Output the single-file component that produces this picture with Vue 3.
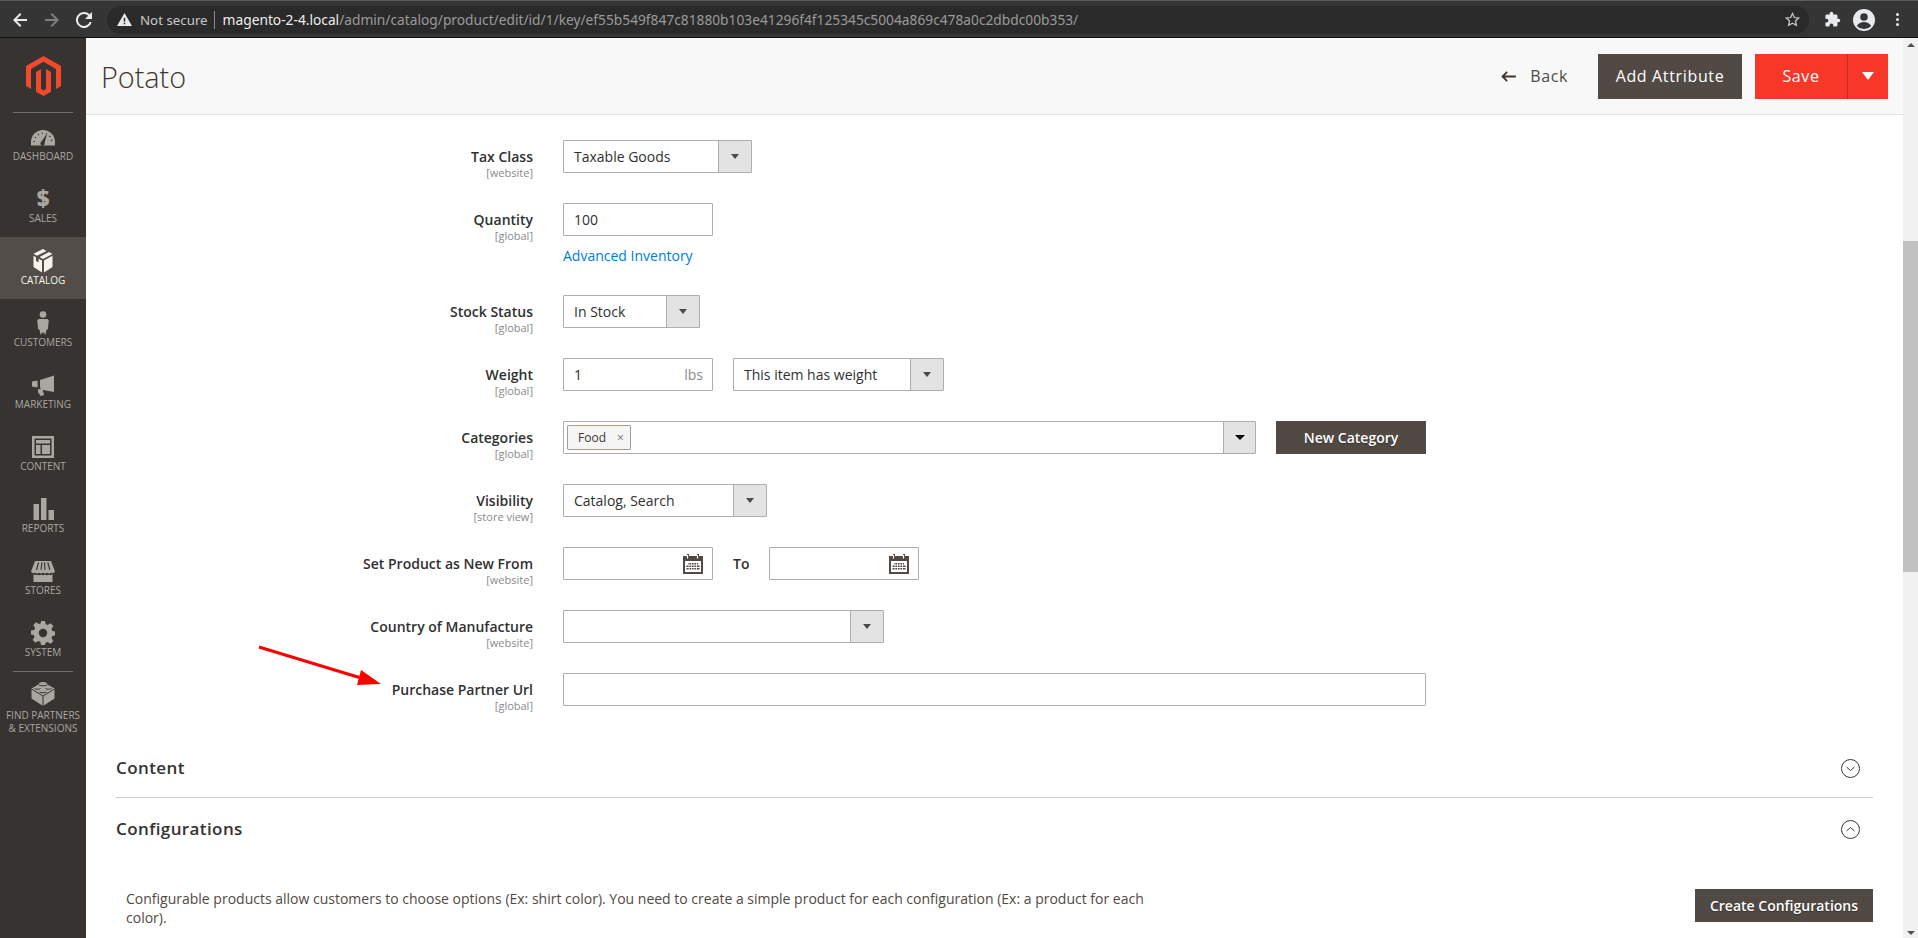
<script setup>
const url = {
  host: 'magento-2-4.local',
  path: '/admin/catalog/product/edit/id/1/key/ef55b549f847c81880b103e41296f4f125345c5004a869c478a0c2dbdc00b353/',
}

const menu = [
  { key: 'dashboard', label: 'Dashboard' },
  { key: 'sales', label: 'Sales' },
  { key: 'catalog', label: 'Catalog', active: true },
  { key: 'customers', label: 'Customers' },
  { key: 'marketing', label: 'Marketing' },
  { key: 'content', label: 'Content' },
  { key: 'reports', label: 'Reports' },
  { key: 'stores', label: 'Stores' },
  { key: 'system', label: 'System' },
]
</script>

<template>
  <div class="app">
    <header class="chrome">
      <svg class="nav" viewBox="0 0 16 16"><path d="M15 7H4.800l4.600-4.600L8 1 1 8l7 7 1.400-1.400L4.800 9H15z" fill="#e8eaed" /></svg>
      <svg class="nav" viewBox="0 0 16 16"><path d="M1 7h10.200L6.600 2.400 8 1l7 7-7 7-1.400-1.400L11.200 9H1z" fill="#7d7f82" /></svg>
      <svg class="nav" viewBox="0 0 16 16"><path d="M13.650 2.350A8 8 0 1 0 15.750 10h-2.100a6 6 0 1 1-1.400-6.250L9 7h7V0z" fill="#e8eaed" /></svg>
      <div class="omnibox">
        <svg class="warn" viewBox="0 0 16 16"><path d="M0 15 8 1l8 14z" fill="#e8eaed" /><path d="M7.200 6h1.600v4.500H7.200zM7.200 11.500h1.600V13H7.200z" fill="#2b2b2b" /></svg>
        <span class="secure">Not secure</span>
        <span class="url-sep"></span>
        <span class="url"><span class="host">{{ url.host }}</span>{{ url.path }}</span>
        <svg class="star" viewBox="0 0 24 24"><path d="M12 3.500l2.600 5.700 6.200.7-4.600 4.200 1.300 6.100L12 17.200l-5.500 3 1.300-6.100-4.600-4.200 6.200-.7z" fill="none" stroke="#c4c7c9" stroke-width="1.800" /></svg>
      </div>
      <svg class="ext" viewBox="0 0 24 24"><path d="M20.500 11H19V7a2 2 0 0 0-2-2h-4V3.500a2.500 2.500 0 0 0-5 0V5H4a2 2 0 0 0-2 2v3.800h1.500a2.700 2.700 0 0 1 0 5.400H2V20a2 2 0 0 0 2 2h3.800v-1.500a2.700 2.700 0 0 1 5.400 0V22H17a2 2 0 0 0 2-2v-4h1.500a2.500 2.500 0 0 0 0-5z" fill="#e8eaed" /></svg>
      <svg class="avatar" viewBox="0 0 24 24"><circle cx="12" cy="12" r="11" fill="#e8eaed" /><circle cx="12" cy="9" r="3.800" fill="#35363a" /><path d="M4.800 18c1.500-2.700 4.300-4 7.200-4s5.700 1.300 7.200 4A9.200 9.200 0 0 1 12 21a9.200 9.200 0 0 1-7.200-3z" fill="#35363a" /></svg>
      <div class="dots"><i></i><i></i><i></i></div>
    </header>

    <div class="body">
      <aside class="sidebar">
        <div class="logo">
          <svg viewBox="0 0 35 40"><path d="M17.500 0 0 10v20l5 2.900V13l12.500-7.200L30 13v19.900l5-2.900V10z" fill="#f1492d" /><path d="M20 32.900l-2.500 1.500-2.500-1.500V13l-5 2.900v19.800l7.500 4.300 7.500-4.300V15.900L20 13z" fill="#f1492d" /></svg>
        </div>
        <nav class="menu">
          <a v-for="item in menu" :key="item.key" class="item" :class="{ active: item.active }">
            <span class="icon">
              <svg v-if="item.key === 'dashboard'" viewBox="0 0 24 24"><path d="M0 20.500v-3.500A12 12 0 0 1 24 17v3.500z" fill="currentColor" /><path d="M3.200 17A8.800 8.800 0 0 1 20.800 17" fill="none" stroke="#373330" stroke-width="1.600" stroke-dasharray="1 3.200" /><path d="M16 8.500 10.600 16.500a2.200 2.200 0 1 0 3 1.300z" fill="#373330" /></svg>
              <span v-else-if="item.key === 'sales'" class="dollar">$</span>
              <svg v-else-if="item.key === 'catalog'" viewBox="0 0 24 24"><path d="M12 0 2.500 4.800 6 6.700l9.500-4.800zM18 3.100 8.500 8l3.500 1.900L21.500 5zM2.500 6.800V18l8.500 5.500V11.600l-3.500-1.900v3.500L5 12V8.200zM13 11.600v11.900l8.500-5.500V6.800z" fill="currentColor" /></svg>
              <svg v-else-if="item.key === 'customers'" viewBox="0 0 24 24"><circle cx="12" cy="3.500" r="3.300" fill="currentColor" /><path d="M7.500 8h9l1.300 1.500-1 9h-1.300L14.500 24l-1.800-3-.7 2-.7-2-1.800 3-1-5.500H7.200l-1-9z" fill="currentColor" /></svg>
              <svg v-else-if="item.key === 'marketing'" viewBox="0 0 24 24"><path d="M23 2.500v16.500L9.500 16.500v-2h-.5V7zM1 8.500l5.500-1v7l-5.500-1zM7 16l4.500.8 1.700 5.200-3.700 1-2.500-4z" fill="currentColor" /></svg>
              <svg v-else-if="item.key === 'content'" viewBox="0 0 24 24"><path d="M1 1h22v22H1zm2.500 2.500v17h17v-17z" fill="currentColor" /><path d="M5 5h14v3.500H5zM5 10h4.500v9H5zM11 10h8v9h-8z" fill="currentColor" /></svg>
              <svg v-else-if="item.key === 'reports'" viewBox="0 0 24 24"><path d="M2.500 7h5.500v16H2.500zM10 1h5.500v22H10zM17.500 13h5.500v10h-5.500z" fill="currentColor" /></svg>
              <svg v-else-if="item.key === 'stores'" viewBox="0 0 24 24"><path d="M4 2h16l4 10.500a3 3 0 0 1-4 1.300 3.500 3.500 0 0 1-4 0 3.500 3.500 0 0 1-4 0 3.500 3.500 0 0 1-4 0 3.500 3.500 0 0 1-4 0 3 3 0 0 1-4-1.300z" fill="currentColor" /><path d="M7.500 3.500 5.500 11M11 3.500 10 11M13.500 3.500 14 11M16.800 3.500 18.800 11" stroke="#373330" stroke-width="1.100" /><path d="M2.500 15.500a5 5 0 0 0 3.500.3 5 5 0 0 0 4 0 5 5 0 0 0 4 0 5 5 0 0 0 4 0 5 5 0 0 0 3.500-.3V23h-19z" fill="currentColor" /></svg>
              <svg v-else-if="item.key === 'system'" viewBox="0 0 24 24"><path fill-rule="evenodd" d="M10 0h4l.7 3.300 2 .8L19.500 2.300l2.800 2.800-1.800 2.800.8 2 3.300.7v3.800l-3.300.7-.8 2 1.800 2.800-2.800 2.800-2.800-1.800-2 .8L14 24h-4l-.7-3.300-2-.8-2.800 1.800-2.800-2.800 1.800-2.800-.8-2L0 13.400V9.600l3.300-.7.8-2L2.300 4.100l2.800-2.800 2.800 1.800 2-.8zM12 7.800a4.200 4.200 0 1 0 0 8.400 4.200 4.200 0 0 0 0-8.400z" fill="currentColor" /></svg>
            </span>
            <span class="label">{{ item.label }}</span>
          </a>
          <a class="item partners">
            <span class="icon">
              <svg viewBox="0 0 24 24"><path d="M12 0c2.500 0 4 .8 4 1.800v.5l7.500 4.200v10L12 24 .5 16.500v-10L8 2.300v-.5C8 .8 9.500 0 12 0z" fill="currentColor" /><path d="M.5 7 12 14l11.500-7M12 14v10M8 3c1 1 7 1 8 0M3.500 6.500c1 1 5 1 6 0M14.500 6.500c1 1 5 1 6 0M8.500 10c1 1 6 1 7 0" fill="none" stroke="#373330" stroke-width="1" /></svg>
            </span>
            <span class="label">Find Partners<br />&amp; Extensions</span>
          </a>
        </nav>
      </aside>

      <main class="main">
        <div class="page-head">
          <h1>Potato</h1>
          <div class="actions">
            <a class="back">
              <svg viewBox="0 0 16 12"><path d="M6.500 1 1.500 6l5 5M1.500 6H16" fill="none" stroke="#41362f" stroke-width="2" /></svg>
              Back
            </a>
            <button class="btn-head">Add Attribute</button>
            <div class="save">
              <span class="save-label">Save</span>
              <span class="save-toggle"><b></b></span>
            </div>
          </div>
        </div>

        <form class="form" @submit.prevent>
          <div class="row">
            <div class="caption"><label>Tax Class</label><small>[website]</small></div>
            <div class="select w-tax"><span>Taxable Goods</span><i><b></b></i></div>
          </div>

          <div class="row with-note">
            <div class="caption"><label>Quantity</label><small>[global]</small></div>
            <div>
              <div class="input w-short">100</div>
              <a class="link">Advanced Inventory</a>
            </div>
          </div>

          <div class="row">
            <div class="caption"><label>Stock Status</label><small>[global]</small></div>
            <div class="select w-stock"><span>In Stock</span><i><b></b></i></div>
          </div>

          <div class="row">
            <div class="caption"><label>Weight</label><small>[global]</small></div>
            <div class="input w-short weight">1<em>lbs</em></div>
            <div class="select w-weight"><span>This item has weight</span><i><b></b></i></div>
          </div>

          <div class="row">
            <div class="caption"><label>Categories</label><small>[global]</small></div>
            <div class="select w-cat">
              <span class="chips"><span class="chip">Food<u>×</u></span></span>
              <i class="cat-arrow"><b></b></i>
            </div>
            <button class="btn new-cat">New Category</button>
          </div>

          <div class="row">
            <div class="caption"><label>Visibility</label><small>[store view]</small></div>
            <div class="select w-vis"><span>Catalog, Search</span><i><b></b></i></div>
          </div>

          <div class="row">
            <div class="caption"><label>Set Product as New From</label><small>[website]</small></div>
            <div class="input w-short date">
              <svg viewBox="0 0 20 20"><path d="M0 2h20v18H0z" fill="#514943" /><path d="M2 7h16v11H2z" fill="#fff" /><path d="M4 2h2V0H4zM14 2h2V0h-2z" fill="#514943" /><path d="M4.500 1v3.500M14.500 1v3.500" stroke="#fff" stroke-width="1.200" /><path d="M5 9h10v1.500H5zM3.500 11.500h13V13h-13zM3.500 14h13v1.500h-13z" fill="#514943" /><path d="M6 9v7M8.500 9v7M11 9v7M13.500 9v7" stroke="#fff" stroke-width=".8" /></svg>
            </div>
            <span class="to">To</span>
            <div class="input w-short date">
              <svg viewBox="0 0 20 20"><path d="M0 2h20v18H0z" fill="#514943" /><path d="M2 7h16v11H2z" fill="#fff" /><path d="M4 2h2V0H4zM14 2h2V0h-2z" fill="#514943" /><path d="M4.500 1v3.500M14.500 1v3.500" stroke="#fff" stroke-width="1.200" /><path d="M5 9h10v1.500H5zM3.500 11.500h13V13h-13zM3.500 14h13v1.500h-13z" fill="#514943" /><path d="M6 9v7M8.500 9v7M11 9v7M13.500 9v7" stroke="#fff" stroke-width=".8" /></svg>
            </div>
          </div>

          <div class="row">
            <div class="caption"><label>Country of Manufacture</label><small>[website]</small></div>
            <div class="select w-country"><span></span><i><b></b></i></div>
          </div>

          <div class="row">
            <div class="caption"><label>Purchase Partner Url</label><small>[global]</small></div>
            <div class="input w-full"></div>
          </div>
        </form>

        <section class="section first">
          <h2>Content</h2>
          <svg class="toggle" viewBox="0 0 19 19"><circle cx="9.500" cy="9.500" r="9" fill="none" stroke="#41362f" stroke-width="1" /><path d="M5.500 8 9.500 11.500l4-3.500" fill="none" stroke="#41362f" stroke-width="1" /></svg>
        </section>
        <section class="section">
          <h2>Configurations</h2>
          <svg class="toggle" viewBox="0 0 19 19"><circle cx="9.500" cy="9.500" r="9" fill="none" stroke="#41362f" stroke-width="1" /><path d="M5.500 11 9.500 7.500l4 3.500" fill="none" stroke="#41362f" stroke-width="1" /></svg>
        </section>
        <div class="config">
          <p>Configurable products allow customers to choose options (Ex: shirt color). You need to create a simple product for each configuration (Ex: a product for each color).</p>
          <button class="btn create">Create Configurations</button>
        </div>
      </main>

      <div class="scrollbar">
        <span class="up"></span>
        <span class="thumb"></span>
        <span class="down"></span>
      </div>
    </div>

    <svg class="annotation" viewBox="0 0 140 50">
      <path d="M2 2 104 33" stroke="#f00" stroke-width="3" />
      <path d="M104 25 124 39 100 40z" fill="#f00" />
    </svg>
  </div>
</template>

<style scoped>
.app {
  position: relative;
  width: 1918px;
  height: 938px;
  overflow: hidden;
  display: flex;
  flex-direction: column;
  font-family: "Open Sans", "Noto Sans", sans-serif;
  background: #fff;
}

.chrome {
  height: 38px;
  flex: none;
  box-sizing: border-box;
  display: flex;
  align-items: center;
  padding: 1px 0 0 12px;
  background: #353535;
  border-top: 1px solid #5a5a5a;
  border-bottom: 1px solid #111;
}

.nav {
  width: 16px;
  height: 16px;
  margin-right: 16px;
}

.omnibox {
  width: 1702px;
  height: 28px;
  margin-left: -1px;
  display: flex;
  align-items: center;
  padding: 0 10px;
  box-sizing: border-box;
  background: #2a2a2a;
  border-radius: 14px;
  color: #9a9a9a;
  font-size: 13.75px;
  font-family: "Noto Sans", sans-serif;
  white-space: nowrap;
}

.warn {
  width: 15px;
  height: 15px;
}

.secure {
  margin-left: 8px;
  font-size: 13.3px;
  color: #c9c9c9;
}

.url-sep {
  width: 1px;
  height: 18px;
  margin: 0 8px 0 6px;
  background: #8a8a8a;
}

.host {
  color: #eee;
}

.url {
  flex: 1;
}

.star {
  width: 17px;
  height: 17px;
  margin-right: -2px;
}

.ext {
  width: 17px;
  height: 17px;
  margin-left: 15px;
}

.avatar {
  width: 24px;
  height: 24px;
  margin-left: 11px;
}

.dots {
  margin-left: 20px;
  display: flex;
  flex-direction: column;
  gap: 2px;
}

.dots i {
  width: 3px;
  height: 3px;
  border-radius: 50%;
  background: #e8eaed;
}

.body {
  flex: 1;
  display: flex;
  min-height: 0;
}

.sidebar {
  width: 86px;
  flex: none;
  background: #373330;
}

.logo {
  height: 75px;
  display: flex;
  align-items: center;
  justify-content: center;
  position: relative;
}

.logo svg {
  width: 35px;
  height: 40px;
}

.menu {
  display: flex;
  flex-direction: column;
}

.logo::after {
  content: '';
  position: absolute;
  left: 13px;
  right: 13px;
  bottom: 0;
  height: 1px;
  background: #736e69;
}

.item {
  height: 62px;
  box-sizing: border-box;
  padding-top: 12px;
  display: flex;
  flex-direction: column;
  align-items: center;
  color: #aaa6a0;
}

.item.active {
  background: #524d49;
  color: #f7f3eb;
}

.icon {
  width: 24px;
  height: 24px;
  display: flex;
  align-items: center;
  justify-content: center;
}

.icon svg {
  width: 24px;
  height: 24px;
}

.dollar {
  font-size: 22px;
  line-height: 24px;
  font-weight: 800;
  transform: translateY(-1px);
}

.label {
  margin-top: 1px;
  font-size: 10px;
  line-height: 13px;
  text-align: center;
  text-transform: uppercase;
  white-space: nowrap;
}

.partners {
  position: relative;
  padding-top: 11px;
  height: 80px;
}

.partners .label {
  margin-top: 3px;
}

.partners::before {
  content: '';
  position: absolute;
  left: 13px;
  right: 13px;
  top: 0;
  height: 1px;
  background: #736e69;
}

.main {
  flex: 1;
  min-width: 0;
}

.page-head {
  height: 77px;
  box-sizing: border-box;
  display: flex;
  align-items: center;
  justify-content: space-between;
  padding: 0 15px 0 15px;
  background: #f8f8f8;
  border-bottom: 1px solid #e3e3e3;
}

.page-head h1 {
  margin: 0;
  font-size: 28.8px;
  font-weight: 300;
  color: #41362f;
}

.actions {
  display: flex;
  align-items: center;
}

.back {
  display: flex;
  align-items: center;
  gap: 14px;
  margin-right: 30px;
  font-size: 16px;
  font-weight: 500;
  letter-spacing: .6px;
  color: #514943;
}

.back svg {
  width: 15px;
  height: 11px;
}

.btn-head {
  width: 144px;
  height: 45px;
  padding: 0;
  border: 0;
  background: #514943;
  color: #fff;
  font: 500 16px "Open Sans", sans-serif;
  letter-spacing: .65px;
}

.save {
  width: 133px;
  height: 45px;
  margin-left: 13px;
  display: flex;
  background: #f73829;
  color: #fff;
  font-size: 16px;
  font-weight: 500;
  letter-spacing: .6px;
}

.save-label {
  width: 92px;
  display: flex;
  align-items: center;
  justify-content: center;
  border-right: 1px solid #c92a1e;
}

.save-toggle {
  flex: 1;
  display: flex;
  align-items: center;
  justify-content: center;
}

.save-toggle b {
  border-left: 6px solid transparent;
  border-right: 6px solid transparent;
  border-top: 8px solid #fff;
}

.form {
  padding: 25px 0 1px 30px;
}

.row {
  display: flex;
  align-items: flex-start;
  height: 33px;
  margin-bottom: 30px;
}

.row.with-note {
  margin-bottom: 59px;
}

.caption {
  width: 417px;
  height: 33px;
  margin-right: 30px;
  flex: none;
  text-align: right;
}

.caption label {
  display: block;
  font-size: 14px;
  line-height: 33px;
  font-weight: 600;
  color: #303030;
}

.caption small {
  display: block;
  margin-top: -6px;
  font-size: 11px;
  line-height: 11px;
  color: #8a8a8a;
}

.input,
.select {
  height: 33px;
  box-sizing: border-box;
  display: flex;
  align-items: center;
  flex: none;
  border: 1px solid #adadad;
  border-radius: 1px;
  background: #fff;
  font-size: 14px;
  color: #303030;
}

.input {
  padding-left: 10px;
}

.select span {
  flex: 1;
  padding-left: 10px;
}

.select i {
  width: 33px;
  height: 100%;
  flex: none;
  display: flex;
  align-items: center;
  justify-content: center;
  background: #e3e3e3;
  border-left: 1px solid #adadad;
  box-sizing: border-box;
}

.select b {
  border-left: 4px solid transparent;
  border-right: 4px solid transparent;
  border-top: 5px solid #514943;
}

.w-tax { width: 189px; }
.w-short { width: 150px; }
.w-stock { width: 137px; }
.w-weight { width: 211px; margin-left: 20px; }
.w-cat { width: 693px; }
.w-vis { width: 204px; }
.w-country { width: 321px; }
.w-full { width: 863px; }

.link {
  display: block;
  margin-top: 10px;
  font-size: 14px;
  line-height: 20px;
  color: #007bdb;
}

.weight {
  justify-content: space-between;
  padding-right: 9px;
}

.weight em {
  font-style: normal;
  color: #8a8a8a;
}

.select .chips {
  padding-left: 3px;
}

.select .chip {
  display: inline-flex;
  align-items: center;
  flex: none;
  height: 25px;
  width: 64px;
  box-sizing: border-box;
  padding-left: 10px;
  border: 1px solid #a79d95;
  border-radius: 1px;
  background: #f5f5f5;
  font-size: 12px;
  color: #41362f;
}

.chip u {
  margin-left: 11px;
  text-decoration: none;
  font-size: 12px;
  color: #736e69;
}

.select .cat-arrow {
  width: 32px;
}

.select .cat-arrow b {
  border-left-width: 5px;
  border-right-width: 5px;
  border-top-color: #000;
}

.btn {
  border: 0;
  padding: 0;
  background: #514943;
  color: #fff;
  font: 600 14px "Open Sans", sans-serif;
  text-shadow: 0 1px 1px rgba(0, 0, 0, .35);
}

.new-cat {
  width: 150px;
  height: 33px;
  margin-left: 20px;
}

.date {
  justify-content: flex-end;
  padding: 0 9px 0 0;
}

.date svg {
  width: 20px;
  height: 20px;
}

.to {
  width: 56px;
  padding-left: 20px;
  box-sizing: border-box;
  font-size: 14px;
  line-height: 33px;
  font-weight: 600;
  color: #303030;
}

.section {
  margin: 0 30px;
  height: 61px;
  box-sizing: border-box;
  display: flex;
  align-items: center;
  justify-content: space-between;
  padding: 0 13px 0 0;
}

.section.first {
  border-bottom: 1px solid #ccc;
}

.section h2 {
  margin: 0;
  font-size: 17px;
  font-weight: 600;
  letter-spacing: .4px;
  color: #333;
}

.toggle {
  width: 19px;
  height: 19px;
  margin-top: 2px;
}

.config {
  margin: 30px 30px 0 40px;
  display: flex;
  align-items: flex-start;
  justify-content: space-between;
}

.config p {
  margin: 0;
  width: 1030px;
  font-size: 14px;
  line-height: 19px;
  color: #514943;
}

.create {
  width: 178px;
  height: 33px;
}

.scrollbar {
  width: 15px;
  flex: none;
  position: relative;
  background: #f1f1f1;
  display: flex;
  flex-direction: column;
  align-items: center;
}

.up,
.down {
  border-left: 4px solid transparent;
  border-right: 4px solid transparent;
}

.up {
  margin-top: 5px;
  border-bottom: 4px solid #505050;
}

.thumb {
  width: 15px;
  height: 331px;
  margin-top: 194px;
  background: #c1c1c1;
}

.down {
  margin-top: auto;
  margin-bottom: 3px;
  border-top: 4px solid #505050;
}

.annotation {
  position: absolute;
  left: 257px;
  top: 645px;
  width: 140px;
  height: 50px;
}
</style>

<style>
html,
body {
  margin: 0;
  overflow: hidden;
}
</style>
